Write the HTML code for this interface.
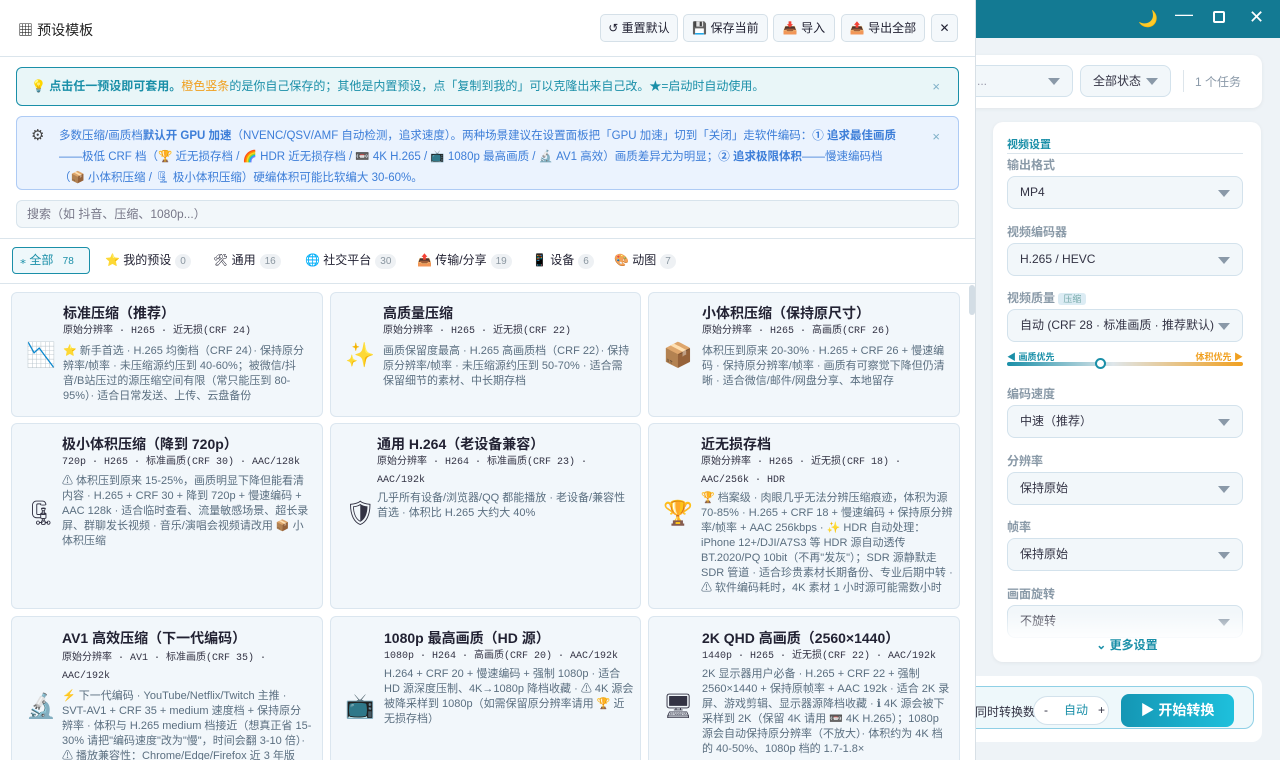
<!DOCTYPE html>
<html><head><meta charset="utf-8"><style>
*{box-sizing:border-box;margin:0;padding:0}
body{width:1280px;height:760px;overflow:hidden;font-family:"Liberation Sans","Noto Sans CJK SC",sans-serif;background:#eef3f7;position:relative;font-size:12px;color:#334}
.tb{position:absolute;left:975px;top:0;width:305px;height:38px;background:#137a93}
.tb span{position:absolute;color:#fff;top:9px;font-size:16px}
.topc{position:absolute;left:960px;top:55px;width:302px;height:53px;background:#fff;border-radius:10px;box-shadow:0 1px 4px rgba(0,0,0,.06)}
.sel{position:absolute;background:#f2f7fa;border:1px solid #d3e2ec;border-radius:8px;font-size:12px;color:#334;padding-left:12px}
.sel:after{content:"";position:absolute;right:12px;top:50%;margin-top:-3px;border:6px solid transparent;border-top:7px solid #8a99a8;border-bottom:0}
.panel{position:absolute;left:993px;top:122px;width:268px;height:540px;background:#fff;border-radius:10px;box-shadow:0 1px 4px rgba(0,0,0,.06)}
.lab{position:absolute;left:14px;font-size:12px;color:#8a9aa8;font-weight:bold}
.bot{position:absolute;left:960px;top:676px;width:302px;height:66px;background:#fff;border-radius:10px}
.modal{position:absolute;left:0;top:0;width:976px;height:760px;background:#fff;border-right:1px solid #d8e0e6;overflow:hidden}
.hdr{height:57px;border-bottom:1px solid #dbe5ec;position:relative}
.btn{position:absolute;top:14px;height:28px;border:1px solid #d5e0e8;border-radius:5px;background:#f4f8fb;font-size:12px;color:#223;line-height:26px;text-align:center}
.tip{position:absolute;left:16px;width:943px;border-radius:6px;font-size:12px}
.x{position:absolute;right:18px;color:#7fb0c8;font-size:13px}
.tabs span.c{display:inline-block;background:#eef1f4;color:#8a96a0;border-radius:8px;font-size:10px;padding:0 5px;margin-left:4px;line-height:15px}
.tab{position:absolute;top:247px;height:27px;line-height:27px;font-size:12px;color:#223}
.card{position:absolute;background:#f2f7fb;border:1px solid #dbe6ef;border-radius:6px;overflow:hidden}
.card h3{position:absolute;font-size:14px;font-weight:bold;color:#223;top:10px}
.card .m{position:absolute;font-family:"Liberation Mono","Noto Sans CJK SC",monospace;font-size:10px;color:#334;line-height:18px}
.card .d{position:absolute;font-size:11px;color:#5b6f80;line-height:15px}
.card .ic{position:absolute;font-size:24px;left:14px;width:30px;text-align:center}
</style></head><body>
<div class="tb"><span style="left:163px">🌙</span><span style="left:200px;top:4px;font-size:18px">—</span><span style="left:238px;top:11px;width:12px;height:12px;border:2px solid #fff;border-radius:2px"></span><span style="left:274px;top:7px;font-size:18px">✕</span></div>
<div class="topc">
 <div class="sel" style="left:-20px;top:10px;width:133px;height:32px;line-height:30px;color:#99a">…名...</div>
 <div class="sel" style="left:120px;top:10px;width:91px;height:32px;line-height:30px">全部状态</div>
 <div style="position:absolute;left:223px;top:15px;width:1px;height:22px;background:#dde5eb"></div>
 <div style="position:absolute;left:235px;top:18px;color:#8a99a8;font-size:12px">1 个任务</div>
</div>
<div class="panel">
 <div style="position:absolute;left:14px;top:14px;font-size:11px;font-weight:bold;color:#1a8fa8">视频设置</div>
 <div style="position:absolute;left:14px;top:31px;width:236px;height:1px;background:#dbe5ec"></div>
 <div class="lab" style="top:34px">输出格式</div>
 <div class="sel" style="left:14px;top:54px;width:236px;height:33px;line-height:31px">MP4</div>
 <div class="lab" style="top:101px">视频编码器</div>
 <div class="sel" style="left:14px;top:121px;width:236px;height:33px;line-height:31px">H.265 / HEVC</div>
 <div class="lab" style="top:167px">视频质量 <span style="background:#dcecf4;color:#7aa;font-size:9px;padding:1px 5px;border-radius:3px;font-weight:normal">压缩</span></div>
 <div class="sel" style="left:14px;top:187px;width:236px;height:33px;line-height:31px">自动 (CRF 28 · 标准画质 · 推荐默认)</div>
 <div style="position:absolute;left:14px;top:228px;font-size:9px;color:#1a8fa8;font-weight:bold">◀ 画质优先</div>
 <div style="position:absolute;right:18px;top:228px;font-size:9px;color:#f0a020;font-weight:bold">体积优先 ▶</div>
 <div style="position:absolute;left:14px;top:240px;width:236px;height:4px;border-radius:2px;background:linear-gradient(90deg,#1a8fa8,#dfe6ea 45%,#f0a020)"></div>
 <div style="position:absolute;left:102px;top:236px;width:11px;height:11px;border-radius:50%;background:#fff;border:2px solid #1a8fa8"></div>
 <div class="lab" style="top:263px">编码速度</div>
 <div class="sel" style="left:14px;top:283px;width:236px;height:33px;line-height:31px">中速（推荐）</div>
 <div class="lab" style="top:330px">分辨率</div>
 <div class="sel" style="left:14px;top:350px;width:236px;height:33px;line-height:31px">保持原始</div>
 <div class="lab" style="top:396px">帧率</div>
 <div class="sel" style="left:14px;top:416px;width:236px;height:33px;line-height:31px">保持原始</div>
 <div class="lab" style="top:463px">画面旋转</div>
 <div class="sel" style="left:14px;top:483px;width:236px;height:33px;line-height:31px">不旋转</div>
 <div style="position:absolute;left:0;top:490px;width:268px;height:30px;background:linear-gradient(rgba(255,255,255,0),#fff)"></div>
 <div style="position:absolute;left:0;width:268px;top:514px;text-align:center;font-size:12px;color:#1a8fa8;font-weight:bold">⌄ 更多设置</div>
</div>
<div class="bot">
 <div style="position:absolute;left:0;top:10px;width:294px;height:43px;border:1px solid #8fd0e6;border-radius:10px;background:#eef8fb"></div>
 <div style="position:absolute;left:15px;top:27px;font-size:12px;color:#334">同时转换数</div>
 <div style="position:absolute;left:73px;top:20px;width:76px;height:29px;border:1px solid #d3e2ec;border-radius:15px;background:#fff;font-size:12px;line-height:27px"><span style="margin-left:10px">-</span><span style="margin-left:16px;color:#1a8fa8">自动</span><span style="margin-left:10px">+</span></div>
 <div style="position:absolute;left:161px;top:18px;width:113px;height:33px;border-radius:8px;background:linear-gradient(90deg,#1496b4,#1ec0dc);color:#fff;font-weight:bold;font-size:14px;line-height:33px;text-align:center">▶ 开始转换</div>
</div>

<div class="modal">
 <div class="hdr">
  <div style="position:absolute;left:18px;top:19px;font-size:15px;color:#222">▦ <span style="font-size:14px">预设模板</span></div>
  <div class="btn" style="left:600px;width:78px">↺ 重置默认</div>
  <div class="btn" style="left:683px;width:85px">💾 保存当前</div>
  <div class="btn" style="left:773px;width:62px">📥 导入</div>
  <div class="btn" style="left:841px;width:84px">📤 导出全部</div>
  <div class="btn" style="left:931px;width:27px">✕</div>
 </div>
 <div class="tip" style="top:67px;height:39px;background:#e9f6f8;border:1px solid #1a8fa8;line-height:37px;padding-left:14px;color:#1a8fa8">💡 <b>点击任一预设即可套用。</b><span style="color:#f0a020">橙色竖条</span>的是你自己保存的；其他是内置预设，点「复制到我的」可以克隆出来自己改。★=启动时自动使用。<span class="x" style="top:0">×</span></div>
 <div class="tip" style="top:116px;height:74px;background:#ebf3fe;border:1px solid #aecbf5;color:#3d7ed8;padding:9px 0 0 42px;line-height:21px;font-size:11.5px;white-space:nowrap;overflow:hidden">
  <span style="position:absolute;left:14px;top:8px;color:#444;font-size:15px">⚙</span>多数压缩/画质档<b>默认开 GPU 加速</b>（NVENC/QSV/AMF 自动检测，追求速度）。两种场景建议在设置面板把「GPU 加速」切到「关闭」走软件编码：<b>① 追求最佳画质</b><br>——极低 CRF 档（🏆 近无损存档 / 🌈 HDR 近无损存档 / 📼 4K H.265 / 📺 1080p 最高画质 / 🔬 AV1 高效）画质差异尤为明显；<b>② 追求极限体积</b>——慢速编码档<br>（📦 小体积压缩 / 🗜 极小体积压缩）硬编体积可能比软编大 30-60%。<span class="x" style="top:9px">×</span></div>
 <div class="tip" style="top:200px;height:28px;background:#f2f7fa;border:1px solid #d8e4ec;line-height:26px;padding-left:10px;color:#778">搜索（如 抖音、压缩、1080p...）</div>
 <div style="position:absolute;left:0;top:238px;width:975px;height:1px;background:#dbe5ec"></div>
 <div class="tabs">
  <div class="tab" style="left:12px;width:78px;border:1px solid #1a8fa8;border-radius:4px;background:#eef8fb;color:#1a8fa8;padding-left:7px;line-height:25px">⁎ 全部 <span style="margin-left:6px;font-size:10px">78</span></div>
  <div class="tab" style="left:105px">⭐ 我的预设<span class="c">0</span></div>
  <div class="tab" style="left:213px">🛠 通用<span class="c">16</span></div>
  <div class="tab" style="left:305px">🌐 社交平台<span class="c">30</span></div>
  <div class="tab" style="left:417px">📤 传输/分享<span class="c">19</span></div>
  <div class="tab" style="left:532px">📱 设备<span class="c">6</span></div>
  <div class="tab" style="left:614px">🎨 动图<span class="c">7</span></div>
 </div>
 <div style="position:absolute;left:0;top:283px;width:975px;height:1px;background:#dbe5ec"></div>
 <div style="position:absolute;left:969px;top:285px;width:6px;height:30px;background:#d3dde5;border-radius:3px"></div>

 <div class="card" style="left:11px;top:292px;width:312px;height:125px"><div class="ic" style="top:48px">📉</div><h3 style="left:51px">标准压缩（推荐）</h3><div class="m" style="left:51px;top:30px">原始分辨率 · H265 · 近无损(CRF 24)</div><div class="d" style="left:51px;top:51px;width:250px">⭐ 新手首选 · H.265 均衡档（CRF 24）· 保持原分辨率/帧率 · 未压缩源约压到 40-60%；被微信/抖音/B站压过的源压缩空间有限（常只能压到 80-95%）· 适合日常发送、上传、云盘备份</div></div>
 <div class="card" style="left:330px;top:292px;width:311px;height:125px"><div class="ic" style="top:48px">✨</div><h3 style="left:52px">高质量压缩</h3><div class="m" style="left:52px;top:30px">原始分辨率 · H265 · 近无损(CRF 22)</div><div class="d" style="left:52px;top:51px;width:250px">画质保留度最高 · H.265 高画质档（CRF 22）· 保持原分辨率/帧率 · 未压缩源约压到 50-70% · 适合需保留细节的素材、中长期存档</div></div>
 <div class="card" style="left:648px;top:292px;width:312px;height:125px"><div class="ic" style="top:48px">📦</div><h3 style="left:53px">小体积压缩（保持原尺寸）</h3><div class="m" style="left:53px;top:30px">原始分辨率 · H265 · 高画质(CRF 26)</div><div class="d" style="left:53px;top:51px;width:250px">体积压到原来 20-30% · H.265 + CRF 26 + 慢速编码 · 保持原分辨率/帧率 · 画质有可察觉下降但仍清晰 · 适合微信/邮件/网盘分享、本地留存</div></div>

 <div class="card" style="left:11px;top:423px;width:312px;height:186px"><div class="ic" style="top:75px">🗜</div><h3 style="left:50px">极小体积压缩（降到 720p）</h3><div class="m" style="left:50px;top:30px">720p · H265 · 标准画质(CRF 30) · AAC/128k</div><div class="d" style="left:50px;top:50px;width:250px">⚠ 体积压到原来 15-25%，画质明显下降但能看清内容 · H.265 + CRF 30 + 降到 720p + 慢速编码 + AAC 128k · 适合临时查看、流量敏感场景、超长录屏、群聊发长视频 · 音乐/演唱会视频请改用 📦 小体积压缩</div></div>
 <div class="card" style="left:330px;top:423px;width:311px;height:186px"><div class="ic" style="top:75px">🛡</div><h3 style="left:46px">通用 H.264（老设备兼容）</h3><div class="m" style="left:46px;top:30px;width:255px">原始分辨率 · H264 · 标准画质(CRF 23) · AAC/192k</div><div class="d" style="left:46px;top:67px;width:258px">几乎所有设备/浏览器/QQ 都能播放 · 老设备/兼容性首选 · 体积比 H.265 大约大 40%</div></div>
 <div class="card" style="left:648px;top:423px;width:312px;height:186px"><div class="ic" style="top:75px">🏆</div><h3 style="left:52px">近无损存档</h3><div class="m" style="left:52px;top:30px;width:252px">原始分辨率 · H265 · 近无损(CRF 18) · AAC/256k · HDR</div><div class="d" style="left:52px;top:67px;width:252px">🏆 档案级 · 肉眼几乎无法分辨压缩痕迹，体积为源 70-85% · H.265 + CRF 18 + 慢速编码 + 保持原分辨率/帧率 + AAC 256kbps · ✨ HDR 自动处理：iPhone 12+/DJI/A7S3 等 HDR 源自动透传 BT.2020/PQ 10bit（不再"发灰"）；SDR 源静默走 SDR 管道 · 适合珍贵素材长期备份、专业后期中转 · ⚠ 软件编码耗时，4K 素材 1 小时源可能需数小时</div></div>

 <div class="card" style="left:11px;top:616px;width:312px;height:160px"><div class="ic" style="top:75px">🔬</div><h3 style="left:50px;top:11px">AV1 高效压缩（下一代编码）</h3><div class="m" style="left:50px;top:33px;width:250px">原始分辨率 · AV1 · 标准画质(CRF 35) · AAC/192k</div><div class="d" style="left:50px;top:72px;width:250px">⚡ 下一代编码 · YouTube/Netflix/Twitch 主推 · SVT-AV1 + CRF 35 + medium 速度档 + 保持原分辨率 · 体积与 H.265 medium 档接近（想真正省 15-30% 请把"编码速度"改为"慢"，时间会翻 3-10 倍）· ⚠ 播放兼容性：Chrome/Edge/Firefox 近 3 年版本、iPhone 15 Pro</div></div>
 <div class="card" style="left:330px;top:616px;width:311px;height:160px"><div class="ic" style="top:75px">📺</div><h3 style="left:53px;top:11px">1080p 最高画质（HD 源）</h3><div class="m" style="left:53px;top:31px">1080p · H264 · 高画质(CRF 20) · AAC/192k</div><div class="d" style="left:53px;top:50px;width:250px">H.264 + CRF 20 + 慢速编码 + 强制 1080p · 适合 HD 源深度压制、4K→1080p 降档收藏 · ⚠ 4K 源会被降采样到 1080p（如需保留原分辨率请用 🏆 近无损存档）</div></div>
 <div class="card" style="left:648px;top:616px;width:312px;height:160px"><div class="ic" style="top:75px">🖥</div><h3 style="left:53px;top:11px">2K QHD 高画质（2560×1440）</h3><div class="m" style="left:53px;top:31px">1440p · H265 · 近无损(CRF 22) · AAC/192k</div><div class="d" style="left:53px;top:50px;width:250px">2K 显示器用户必备 · H.265 + CRF 22 + 强制 2560×1440 + 保持原帧率 + AAC 192k · 适合 2K 录屏、游戏剪辑、显示器源降档收藏 · ℹ 4K 源会被下采样到 2K（保留 4K 请用 📼 4K H.265）；1080p 源会自动保持原分辨率（不放大）· 体积约为 4K 档的 40-50%、1080p 档的 1.7-1.8×</div></div>
</div>
</body></html>
